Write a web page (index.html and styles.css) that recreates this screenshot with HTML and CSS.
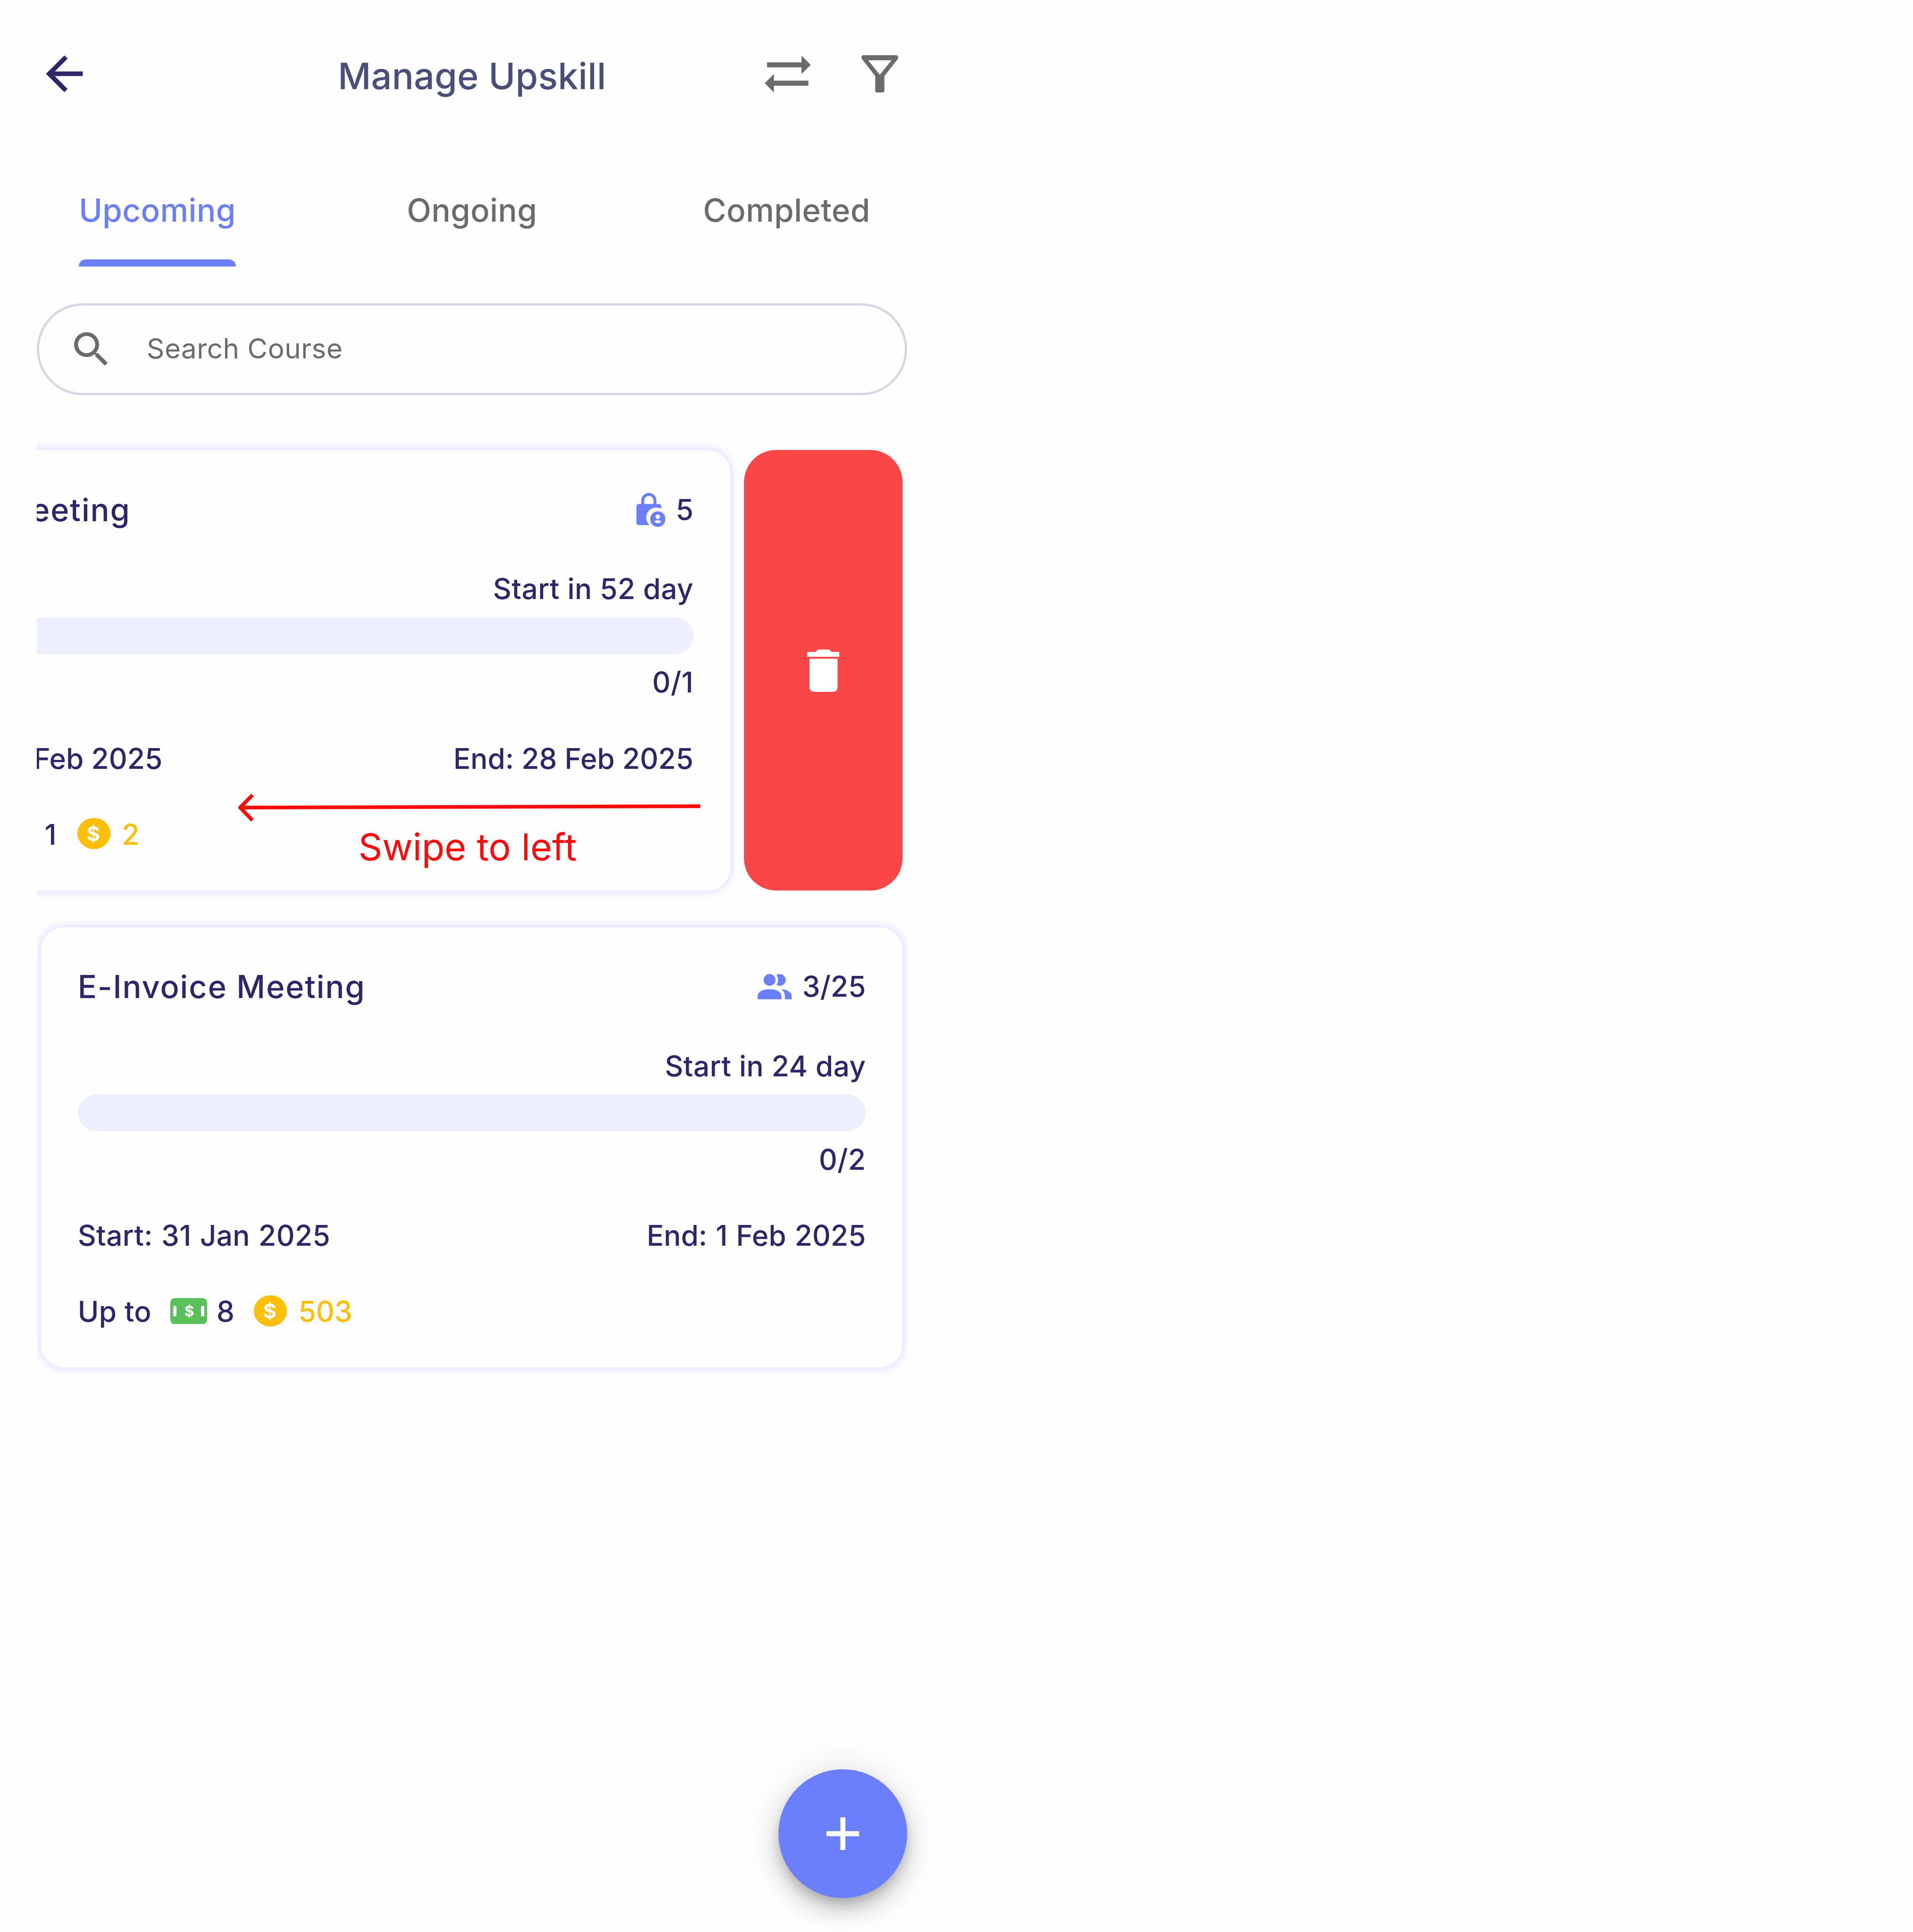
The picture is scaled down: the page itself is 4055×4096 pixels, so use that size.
FILE: index.html
```html
<!DOCTYPE html>
<html lang="en">
<head>
<meta charset="utf-8">
<title>Manage Upskill</title>
<link rel="stylesheet" href="styles.css">
</head>
<body>
<main class="screen">
  <header class="header">
    <svg class="icon-back" viewBox="0 0 24 24"><path d="M20 11H7.83l5.59-5.59L12 4l-8 8 8 8 1.41-1.41L7.83 13H20v-2z"/></svg>
    <h1 class="header-title">Manage Upskill</h1>
    <div class="header-actions">
      <svg class="icon-swap" viewBox="0 0 100 80"><path d="M5 14.500h75V0l20 20-20 20V25.500H5zM95 54.500H20V40L0 60l20 20V65.500h75z"/></svg>
      <svg class="icon-filter" viewBox="0 0 80 81"><path fill-rule="evenodd" d="M5 0h70q5 0 5 5 0 2-1.500 4L50 45.500V77q0 4-4 4H34q-4 0-4-4V45.500L1.500 9Q0 7 0 5q0-5 5-5zM14.500 11L40 42.500 65.500 11z"/></svg>
    </div>
  </header>

  <nav class="tabs">
    <a class="tab tab-active">Upcoming</a>
    <a class="tab">Ongoing</a>
    <a class="tab">Completed</a>
  </nav>

  <div class="search">
    <svg class="icon-search" viewBox="0 0 24 24"><path d="M15.500 14h-.79l-.28-.27C15.410 12.590 16 11.110 16 9.500 16 5.910 13.090 3 9.500 3S3 5.910 3 9.500 5.910 16 9.500 16c1.610 0 3.090-.59 4.230-1.570l.27.28v.79l5 4.990L20.490 19l-4.990-5zm-6 0C7.010 14 5 11.990 5 9.500S7.010 5 9.500 5 14 7.010 14 9.500 11.990 14 9.500 14z"/></svg>
    <span class="search-text">Search Course</span>
  </div>

  <section class="list">
    <div class="slidable">
      <div class="slide slide-open">
        <article class="card">
          <div class="row row-title">
            <h2 class="card-title">eeting</h2>
            <div class="count">
              <svg class="icon-lock" viewBox="0 0 63 74"><path fill-rule="evenodd" d="M10.500 24V17a16.500 17 0 0 1 33 0v7h5q5.500 0 5.500 6v4.500a22 22 0 0 0-25.500 35.500H6q-6 0-6-6V30q0-6 6-6zM17 24h20V17a10 10.500 0 0 0-20 0z"/><path fill-rule="evenodd" d="M46.500 40a16.500 17 0 1 0 .01 0zM46.500 47a5 5 0 1 1-.01 0zM38.500 61.500q8-4 16 0-8 9-16 0z"/></svg>
              <span>5</span>
            </div>
          </div>
          <div class="row row-status"><span>Start in 52 day</span></div>
          <div class="bar"></div>
          <div class="row row-progress"><span>0/1</span></div>
          <div class="row row-dates"><span class="date-cut">Feb 2025</span><span>End: 28 Feb 2025</span></div>
          <div class="row row-reward">
            <span class="num-cut">1</span>
            <svg class="icon-coin" viewBox="0 0 72 68"><ellipse cx="36" cy="34" rx="36" ry="34"/><text x="35" y="50" text-anchor="middle">$</text></svg>
            <span class="points">2</span>
          </div>
        </article>
      </div>
      <div class="delete">
        <svg class="icon-trash" viewBox="0 0 70 92"><path d="M18 5l5-5h25l5 5h17v11H0V5zM5 20h61v62q0 10-10 10H15Q5 92 5 82z"/></svg>
      </div>
      <div class="hint">
        <svg class="hint-arrow" viewBox="0 0 1010 64"><path d="M1009 29L8 32M35 4.500L8 32l27 27.500"/></svg>
        <span class="hint-text">Swipe to left</span>
      </div>
    </div>

    <div class="slidable">
      <div class="slide">
        <article class="card">
          <div class="row row-title">
            <h2 class="card-title">E-Invoice Meeting</h2>
            <div class="count">
              <svg class="icon-people" viewBox="2 4 20 15" preserveAspectRatio="none"><path d="M16 17v2H2v-2s0-4 7-4 7 4 7 4m-3.500-9.500A3.500 3.500 0 1 0 9 11a3.500 3.500 0 0 0 3.500-3.500m3.440 5.500A5.320 5.320 0 0 1 18 17v2h4v-2s0-3.630-6.060-4M15 4a3.390 3.390 0 0 0-1.930.59 5 5 0 0 1 0 5.820A3.390 3.390 0 0 0 15 11a3.500 3.500 0 0 0 0-7z"/></svg>
              <span>3/25</span>
            </div>
          </div>
          <div class="row row-status"><span>Start in 24 day</span></div>
          <div class="bar"></div>
          <div class="row row-progress"><span>0/2</span></div>
          <div class="row row-dates"><span class="date-start">Start: 31 Jan 2025</span><span class="date-end">End: 1 Feb 2025</span></div>
          <div class="row row-reward">
            <span class="upto">Up to</span>
            <svg class="icon-cash" viewBox="0 0 80 57"><rect class="note" width="80" height="57" rx="10"/><rect x="6.500" y="17" width="7" height="23" rx="3"/><rect x="67" y="17" width="7" height="23" rx="3"/><text x="41" y="40.500" text-anchor="middle">$</text></svg>
            <span class="cash">8</span>
            <svg class="icon-coin" viewBox="0 0 72 68"><ellipse cx="36" cy="34" rx="36" ry="34"/><text x="35" y="50" text-anchor="middle">$</text></svg>
            <span class="points">503</span>
          </div>
        </article>
      </div>
    </div>
  </section>

  <button class="fab" aria-label="Add"><svg viewBox="0 0 71 71"><path d="M30 0h11v30h30v11H41v30H30V41H0V30h30z"/></svg></button>
</main>
</body>
</html>
```
FILE: styles.css
```css
/* 1rem = two layout units of the 5x phone canvas */
html { font-size: 9.7453px; }
* { box-sizing: border-box; }
body {
  margin: 0;
  background: #fefefe;
  font-family: Inter, "Liberation Sans", sans-serif;
  color: #2f2669;
  overflow: hidden;
}
svg { display: block; flex: none; }
h1, h2 { margin: 0; font-weight: 500; }

.screen {
  position: relative;
  width: 205.33rem;
  height: 420.3rem;
  padding-top: 10.1rem;
  overflow: hidden;
}

.header {
  display: grid;
  grid-template-columns: 1fr auto 1fr;
  align-items: center;
  height: 12rem;
  padding: 0 8rem;
}
.header-title {
  padding-top: 1rem;
  font-size: 7.9rem;
  letter-spacing: .03rem;
  line-height: 9rem;
  color: #4a4f79;
}
.icon-back { width: 12rem; height: 12rem; fill: #2f2669; }
.header-actions {
  display: flex;
  justify-content: flex-end;
  align-items: center;
  gap: 11rem;
  padding-right: 2rem;
  fill: #6b6b6b;
}
.icon-swap { width: 10rem; height: 8rem; }
.icon-filter { width: 8rem; height: 8.1rem; }

.tabs {
  display: grid;
  grid-template-columns: repeat(3, 1fr);
  justify-items: center;
  margin-top: 19.7rem;
}
.tab {
  font-size: 6.9rem;
  font-weight: 500;
  letter-spacing: .04rem;
  line-height: 8rem;
  height: 16.2rem;
  color: #6b6b6b;
}
.tab-active {
  display: flex;
  flex-direction: column;
  justify-content: space-between;
  color: #6b7ffd;
}
.tab-active::after {
  content: "";
  height: 1.6rem;
  border-radius: 1.5rem 1.5rem 0 0;
  background: #6b7ffd;
}

.search {
  display: flex;
  align-items: center;
  gap: 7rem;
  height: 20rem;
  margin: 8rem 8rem 0;
  padding-left: 6.4rem;
  border: .6rem solid #d9d7e5;
  border-radius: 10rem;
  font-size: 6rem;
  letter-spacing: .045rem;
  color: #6b6b6b;
}
.search-text { padding-bottom: .5rem; }
.icon-search { width: 10rem; height: 10rem; fill: #6b6b6b; }

.list {
  display: flex;
  flex-direction: column;
  gap: 8rem;
  margin: 11.9rem 8rem 0;
}
.slidable {
  position: relative;
  display: flex;
  height: 95.8rem;
}
.slide {
  flex: 1;
  padding: 0 1rem 0 .95rem;
  overflow-x: clip;
}
.slide-open { padding-left: 0; }
.slide-open .card { margin-left: -6rem; padding-left: 4.6rem; }
.slide-open .card-title { margin-left: .2rem; }
.card {
  height: 95.8rem;
  padding: 8.5rem 8rem 0 7.95rem;
  border-radius: 5rem;
  background: #fefefe;
  box-shadow: 0 0 2rem .3rem rgba(107, 92, 255, .22);
  font-size: 6.2rem;
  font-weight: 500;
  letter-spacing: .04rem;
}
.row {
  display: flex;
  justify-content: space-between;
  align-items: center;
  height: 8rem;
  line-height: 8rem;
  white-space: nowrap;
}
.row-title { height: 9rem; }
.card-title { font-size: 6.85rem; letter-spacing: .19rem; }
.count { display: flex; align-items: center; gap: 2.3rem; letter-spacing: 0; }
.icon-lock { width: 6.3rem; height: 7.4rem; fill: #6b7ffd; }
.icon-people { width: 7.4rem; height: 5.5rem; fill: #6b7ffd; }
.row-status { margin-top: 8.8rem; justify-content: flex-end; }
.bar {
  height: 8rem;
  margin-top: 2.1rem;
  border-radius: 4rem;
  background: #edefff;
}
.slide-open .bar { margin-left: -4.6rem; }
.row-progress { margin-top: 2.2rem; justify-content: flex-end; }
.row-dates { margin-top: 8.6rem; letter-spacing: 0; }
.date-cut { margin-left: .7rem; }
.date-start { letter-spacing: .03rem; word-spacing: .18rem; }
.date-end { word-spacing: .2rem; }
.row-reward { margin-top: 8.5rem; justify-content: flex-start; }
.num-cut { width: 10.2rem; padding-left: 3.1rem; }
.upto { width: 20.1rem; }
.cash { width: 8.1rem; margin-left: 2.1rem; }
.icon-coin { width: 7.2rem; height: 6.8rem; margin-top: -.5rem; fill: #ffbf07; }
.icon-coin text { fill: #fefefe; font-size: 44px; font-weight: 700; letter-spacing: 0; }
.icon-cash { width: 8rem; height: 5.7rem; margin-top: -.3rem; fill: #fefefe; }
.icon-cash .note { fill: #5bc05b; }
.icon-cash text { font-size: 32px; font-weight: 700; letter-spacing: 0; }
.points { margin-left: 2.5rem; color: #ffbf07; letter-spacing: 0; }

.delete {
  display: flex;
  justify-content: center;
  align-items: center;
  width: 34.5rem;
  margin: 0 1rem 0 2rem;
  border-radius: 7rem;
  background: #fa4646;
}
.icon-trash { width: 7rem; height: 9.2rem; margin-top: .2rem; fill: #fff; }

/* swipe annotation laid over the open card */
.hint {
  position: absolute;
  left: 43.4rem;
  top: 74.6rem;
  width: 101rem;
  display: flex;
  flex-direction: column;
  align-items: center;
  color: #ff0a0a;
}
.hint-arrow {
  width: 101rem;
  height: 6.4rem;
  fill: none;
  stroke: currentColor;
  stroke-width: 8;
  stroke-linejoin: round;
}
.hint-text { margin: .9rem .4rem 0 0; font-size: 8.1rem; line-height: 9rem; }

.fab {
  position: absolute;
  left: 169.35rem;
  top: 384.9rem;
  display: flex;
  justify-content: center;
  align-items: center;
  width: 28rem;
  height: 28rem;
  padding: 0;
  border: 0;
  border-radius: 50%;
  background: #6b7ffd;
  box-shadow: 0 1.5rem 2.5rem -.5rem rgba(0, 0, 0, .2), 0 3rem 5rem rgba(0, 0, 0, .14), 0 .5rem 9rem rgba(0, 0, 0, .12);
}
.fab svg { width: 7.1rem; height: 7.1rem; fill: #fff; }
```
